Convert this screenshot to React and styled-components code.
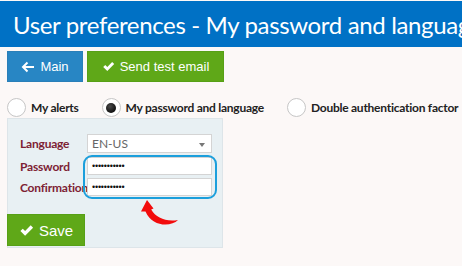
import React from "react";
import styled, { createGlobalStyle } from "styled-components";

const Global = createGlobalStyle`
  html, body { margin: 0; padding: 0; background: #fcf8f7; }
  body { width: 462px; height: 266px; overflow: hidden; font-family: "Lato", sans-serif; }
`;

const Header = styled.div`
  margin-top: 1px;
  height: 46px;
  background: #0071c5;
  display: flex;
  align-items: center;
  padding-left: 13px;
  white-space: nowrap;
  overflow: hidden;
`;

const Title = styled.h1`
  margin: 0;
  font-family: "Lato", sans-serif;
  font-weight: 400;
  font-size: 24px;
  letter-spacing: -0.35px;
  color: #ffffff;
`;

const Toolbar = styled.div`
  display: flex;
  gap: 4px;
  padding: 4px 7px 0;
`;

const Button = styled.button`
  display: flex;
  align-items: center;
  justify-content: center;
  gap: 5px;
  width: ${(p) => p.$w}px;
  height: ${(p) => p.$h || 31}px;
  border: 1px solid ${(p) => p.$border};
  background: ${(p) => p.$bg};
  color: #ffffff;
  font-family: "Liberation Sans", Arial, sans-serif;
  font-size: ${(p) => p.$fs || 13}px;
  padding: 0;
  cursor: pointer;
`;

const RadioRow = styled.div`
  display: flex;
  align-items: center;
  padding: 15px 0 0 7px;
  height: 21px;
`;

const RadioItem = styled.label`
  display: flex;
  align-items: center;
  gap: 5px;
  margin-right: 23px;
  font-family: "Lato", sans-serif;
  font-weight: 700;
  font-size: 12px;
  letter-spacing: -0.25px;
  color: #222;
  white-space: nowrap;
`;

const Circle = styled.span`
  box-sizing: border-box;
  width: 19px;
  height: 19px;
  border: 1px solid #c6c6c6;
  border-radius: 50%;
  background: #fff;
  display: flex;
  align-items: center;
  justify-content: center;
  flex: none;
`;

const Dot = styled.span`
  width: 10px;
  height: 10px;
  border-radius: 50%;
  background: radial-gradient(circle at 40% 35%, #4a4a4a 0%, #111 70%);
`;

const Panel = styled.div`
  position: relative;
  margin-left: 7px;
  width: 214px;
  height: 128px;
  background: #e8f0f3;
  border: 1px solid #dde5e9;
  display: flex;
  flex-direction: column;
`;

const Form = styled.div`
  display: grid;
  grid-template-columns: 67px 125px;
  row-gap: 3px;
  padding: 15px 0 0 12px;
  align-items: center;
`;

const Label = styled.span`
  font-family: "Lato", sans-serif;
  font-weight: 700;
  font-size: 12px;
  letter-spacing: -0.2px;
  color: #7d2233;
  white-space: nowrap;
`;

const Field = styled.div`
  position: relative;
  height: ${(p) => p.$h}px;
  box-sizing: border-box;
  background: #fff;
  border: 1px solid #d4d4d4;
  display: flex;
  align-items: center;
  padding-left: 4px;
  font-family: "Lato", sans-serif;
  font-size: 12px;
  color: #666;
`;

const Dots = styled.span`
  font-family: "Liberation Sans", sans-serif;
  font-size: 9px;
  color: #111;
  letter-spacing: -0.2px;
`;

const Caret = styled.span`
  position: absolute;
  right: 6px;
  top: 8px;
  width: 0;
  height: 0;
  border-left: 3.5px solid transparent;
  border-right: 3.5px solid transparent;
  border-top: 4px solid #777;
`;

const Highlight = styled.div`
  position: absolute;
  left: 75px;
  top: 36px;
  width: 130px;
  height: 40px;
  border: 2px solid #1b9fdc;
  border-radius: 9px;
  pointer-events: none;
`;

const Arrow = styled.svg`
  position: absolute;
  left: 130px;
  top: 79px;
`;

const SaveWrap = styled.div`
  margin-top: auto;
  margin-bottom: 1px;
  margin-left: -1px;
`;

const Check = ({ size = 13 }) => (
  <svg width={size} height={size} viewBox="0 0 16 16">
    <path d="M1.5 8.5 L4 6 L6.5 8.5 L12.5 2.5 L15 5 L6.5 13.5 Z" fill="#fff" />
  </svg>
);

const LeftArrow = () => (
  <svg width="14" height="12" viewBox="0 0 14 12">
    <path d="M13 6 H3 M6.5 1.5 L2 6 L6.5 10.5" stroke="#fff" strokeWidth="2" fill="none" />
  </svg>
);

export default function App() {
  return (
    <>
      <Global />
      <Header>
        <Title>User preferences - My password and language</Title>
      </Header>
      <Toolbar>
        <Button $w={76} $bg="#2886c4" $border="#2a7fb8">
          <LeftArrow />
          Main
        </Button>
        <Button $w={137} $bg="#5fa818" $border="#57a016">
          <Check />
          Send test email
        </Button>
      </Toolbar>
      <RadioRow>
        <RadioItem>
          <Circle />
          My alerts
        </RadioItem>
        <RadioItem>
          <Circle>
            <Dot />
          </Circle>
          My password and language
        </RadioItem>
        <RadioItem>
          <Circle />
          Double authentication factor
        </RadioItem>
      </RadioRow>
      <Panel>
        <Form>
          <Label>Language</Label>
          <Field $h={19}>
            EN-US
            <Caret />
          </Field>
          <Label style={{ marginTop: 1 }}>Password</Label>
          <Field $h={18} style={{ marginTop: 1 }}>
            <Dots>•••••••••••</Dots>
          </Field>
          <Label>Confirmation</Label>
          <Field $h={18}>
            <Dots>•••••••••••</Dots>
          </Field>
        </Form>
        <Highlight />
        <Arrow width="44" height="32" viewBox="0 0 44 32">
          <path
            d="M9 2 L15.5 10.5 L13.2 11.6 C18 20 28 24 40 22 C33 29 14 29 7.5 13.4 L3 13.6 Z"
            fill="#f20c0c"
          />
        </Arrow>
        <SaveWrap>
          <Button $w={78} $h={32} $bg="#5fa818" $border="#57a016" $fs={15}>
            <Check size={15} />
            Save
          </Button>
        </SaveWrap>
      </Panel>
    </>
  );
}
